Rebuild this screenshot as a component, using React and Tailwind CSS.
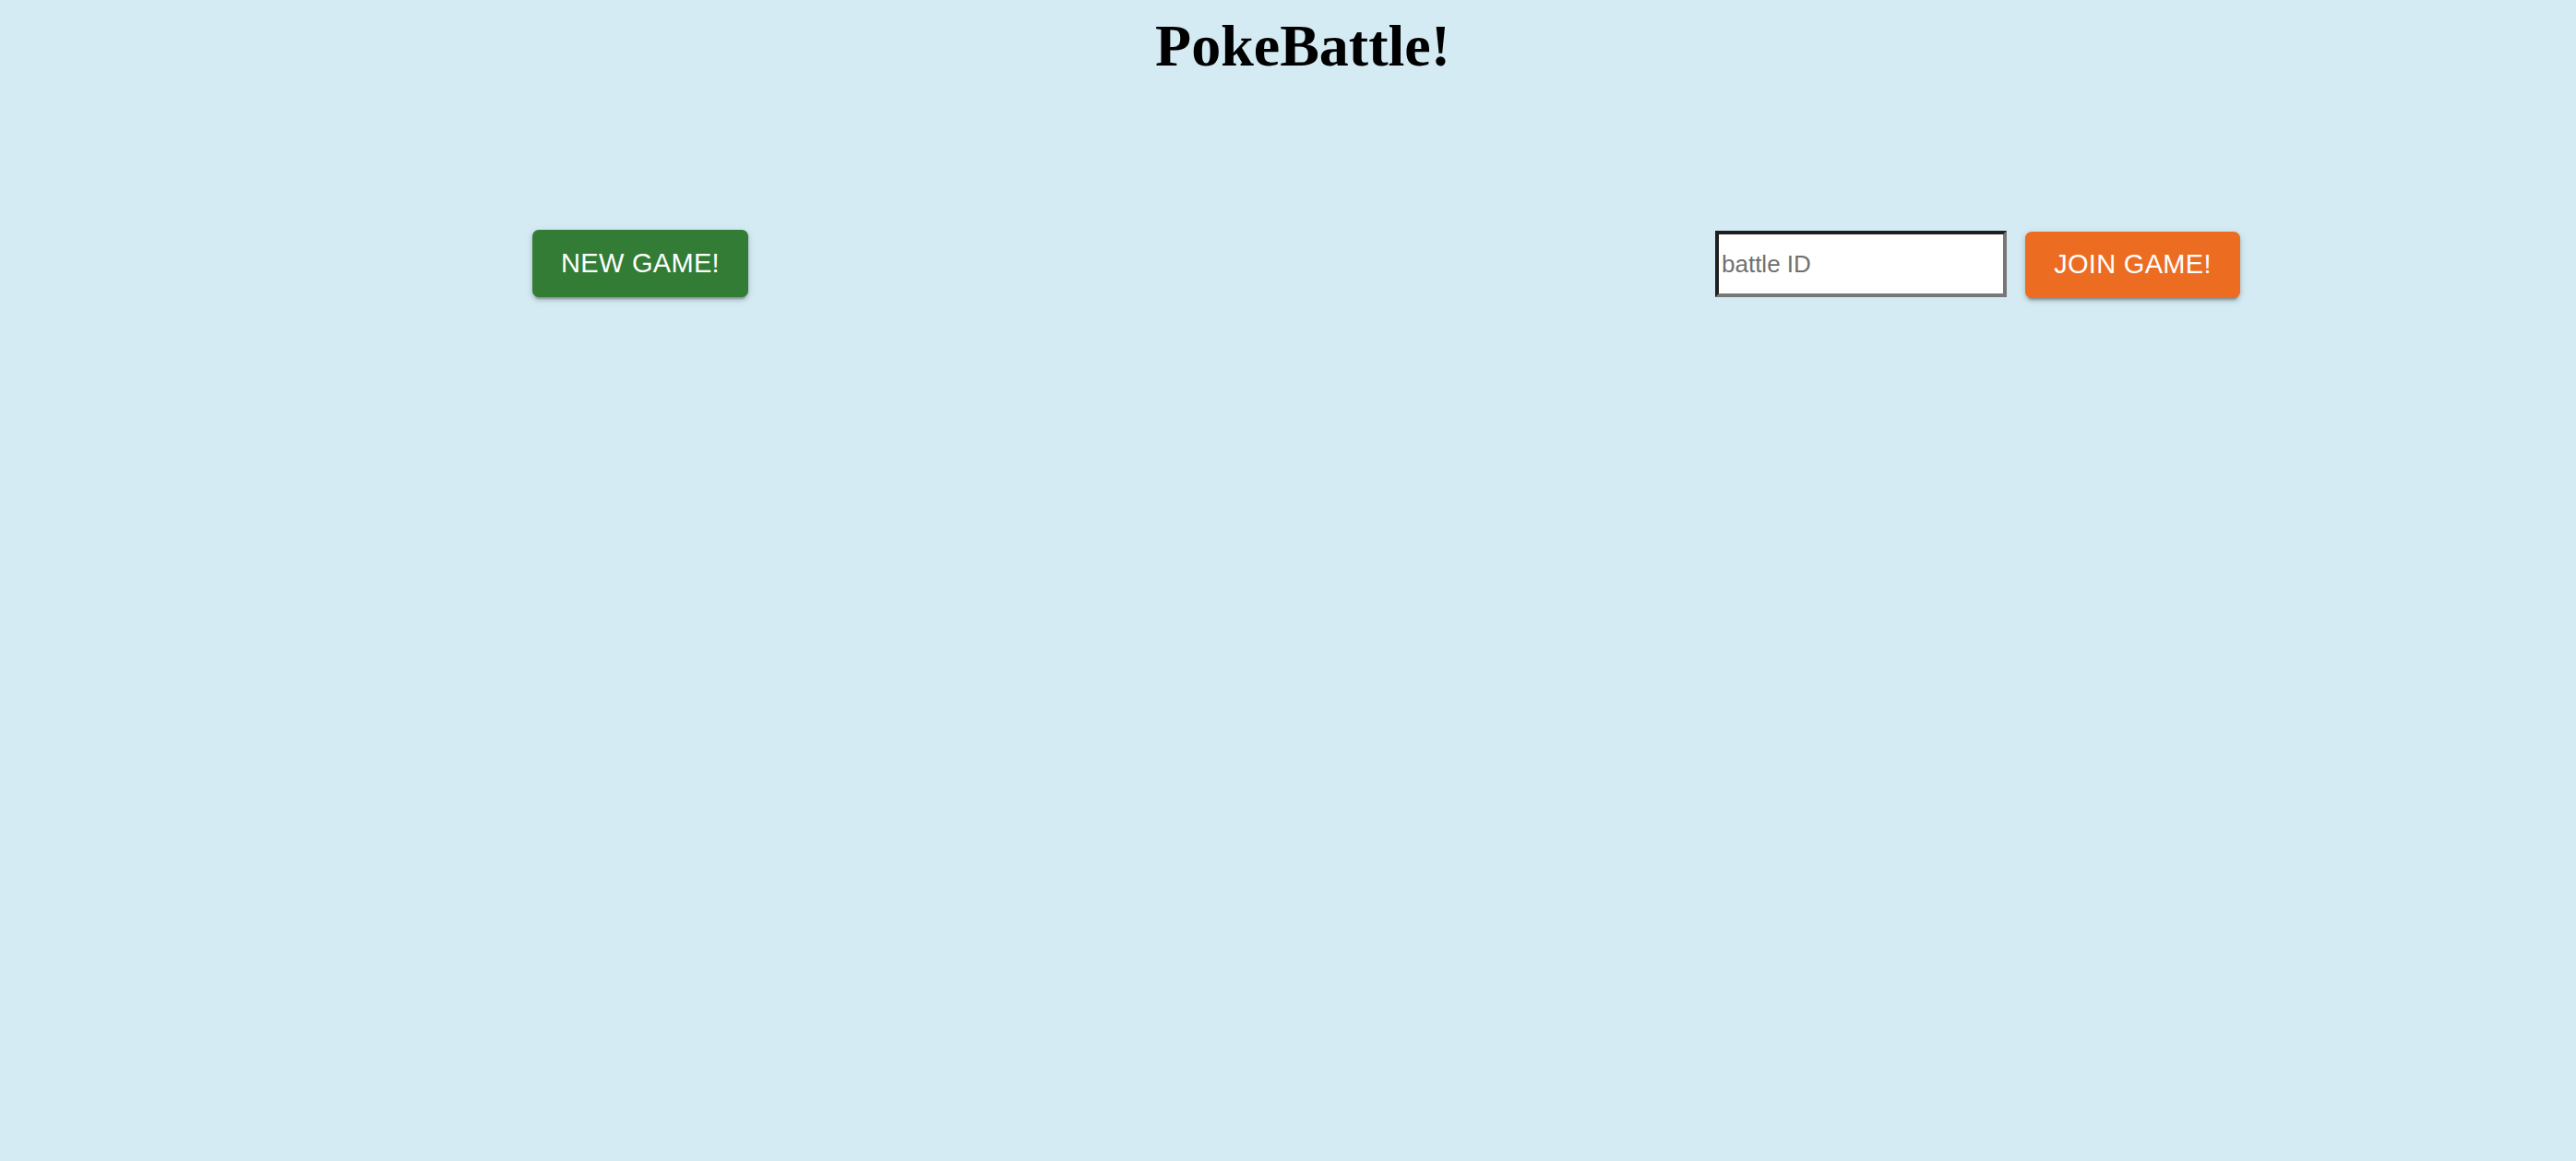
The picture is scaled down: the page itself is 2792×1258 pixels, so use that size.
export default function App() {
  return (
    <div className="min-h-[1258px] w-full bg-[#d4ebf3]">
      <h1 className="pt-[13px] pl-[32px] text-center text-[64px] leading-[73px] font-bold text-black [font-family:'Liberation_Serif',serif]">
        PokeBattle!
      </h1>
      <div className="flex items-start pt-[163px] pl-[577px] pr-[364px]">
        <button className="h-[73px] w-[234px] shrink-0 rounded-[7px] bg-[#327c35] text-[29px] tracking-[0.3px] text-white [font-family:'Liberation_Sans',sans-serif] shadow-[0_5px_2px_-3px_rgba(0,0,0,0.2),0_3px_4px_0_rgba(0,0,0,0.14),0_2px_9px_0_rgba(0,0,0,0.12)]">
          NEW GAME!
        </button>
        <div className="flex-1" />
        <div className="mt-[1px] flex shrink-0 items-start gap-[20px]">
          <input
            placeholder="battle ID"
            className="h-[72px] w-[316px] shrink-0 border-[4px] border-t-[#1f1f1f] border-l-[#1f1f1f] border-b-[#777777] border-r-[#777777] bg-white px-[3px] text-[26px] text-black placeholder:text-[#707070] outline-none [font-family:'Liberation_Sans',sans-serif]"
          />
          <button className="mt-[1px] h-[72px] w-[233px] shrink-0 rounded-[7px] bg-[#ec6c22] text-[29px] tracking-[0.3px] text-white [font-family:'Liberation_Sans',sans-serif] shadow-[0_5px_2px_-3px_rgba(0,0,0,0.2),0_3px_4px_0_rgba(0,0,0,0.14),0_2px_9px_0_rgba(0,0,0,0.12)]">
            JOIN GAME!
          </button>
        </div>
      </div>
    </div>
  );
}
